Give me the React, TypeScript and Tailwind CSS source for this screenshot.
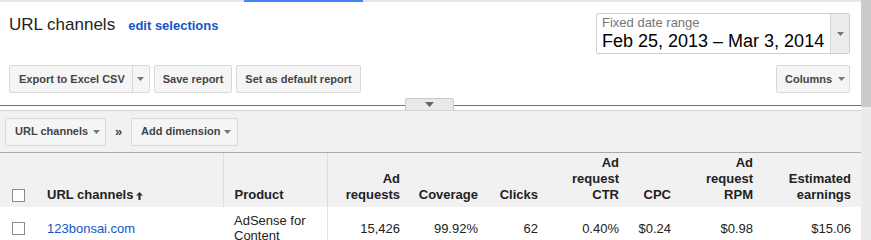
import React from 'react';

const Caret = ({ className = '' }: { className?: string }) => (
    <svg width="7" height="4" viewBox="0 0 7 4" className={className}>
        <path d="M0 0h7L3.5 4z" fill="#777" />
    </svg>
);

const Btn: React.FC<{ children: React.ReactNode; className?: string }> = ({ children, className = '' }) => (
    <div className={"h-[28px] flex items-center rounded-[2px] border border-[#d9d9d9] bg-[#f5f5f5] text-[11px] font-bold text-[#444] " + className}>
        {children}
    </div>
);

const Checkbox = () => <div className="w-[13px] h-[13px] border border-[#8a8a8a] bg-white" />;

const headers: { label: string[]; width: number }[] = [
    { label: ['Ad', 'requests'], width: 83 },
    { label: ['Coverage'], width: 78 },
    { label: ['Clicks'], width: 60 },
    { label: ['Ad', 'request', 'CTR'], width: 81 },
    { label: ['CPC'], width: 52 },
    { label: ['Ad', 'request', 'RPM'], width: 82 },
    { label: ['Estimated', 'earnings'], width: 98 },
];

const values = ['15,426', '99.92%', '62', '0.40%', '$0.24', '$0.98', '$15.06'];

export default function App() {
    return (
        <div className="w-[871px] h-[240px] overflow-hidden flex bg-[#f1f1f1] text-[#222] font-['Liberation_Sans',Arial,sans-serif]">
            <div className="w-[861px] shrink-0">
                {/* top tab strip */}
                <div className="h-[2px] bg-[#e6e6e6]">
                    <div className="ml-[244px] w-[119px] h-full bg-[#4285f4]" />
                </div>

                {/* report header */}
                <div className="bg-white h-[103px] pl-[9px] pr-[11px] pt-[11px]">
                    <div className="flex justify-between items-start">
                        <div className="flex items-baseline gap-[13px] leading-[24px]">
                            <span className="text-[17px]">URL channels</span>
                            <span className="text-[13px] font-bold text-[#1155cc]">edit selections</span>
                        </div>
                        <div className="w-[254px] h-[41px] flex border border-[#cfcfcf] rounded-[2px] bg-white">
                            <div className="flex-1 pl-[5px] pt-[1px]">
                                <div className="text-[13px] leading-[16px] text-[#777]">Fixed date range</div>
                                <div className="text-[18px] leading-[20px] text-black whitespace-nowrap">Feb 25, 2013 – Mar 3, 2014</div>
                            </div>
                            <div className="w-[19px] border-l border-[#d6d6d6] bg-[#ececec] flex items-center justify-center">
                                <Caret />
                            </div>
                        </div>
                    </div>
                    <div className="mt-[11px] flex justify-between">
                        <div className="flex gap-[4px]">
                            <Btn>
                                <span className="pl-[9px] pr-[7px]">Export to Excel CSV</span>
                                <span className="h-full w-[17px] border-l border-[#d9d9d9] flex items-center justify-center">
                                    <Caret />
                                </span>
                            </Btn>
                            <Btn className="px-[8px]">Save report</Btn>
                            <Btn className="px-[8px]">Set as default report</Btn>
                        </div>
                        <Btn className="w-[74px] pl-[8px] gap-[6px]">
                            Columns <Caret />
                        </Btn>
                    </div>
                </div>

                {/* collapse handle */}
                <div className="relative h-[1px] bg-[#4a7cc8]">
                    <div className="absolute left-[405px] top-[-7px] w-[49px] h-[12px] rounded-t-[3px] border border-b-0 border-[#c9c9c9] bg-[#e9e9e9] flex justify-center pt-[3px]">
                        <svg width="9" height="5" viewBox="0 0 9 5">
                            <path d="M0 0h9L4.5 5z" fill="#666" />
                        </svg>
                    </div>
                </div>
                <div className="h-[4px] bg-white" />
                <div className="h-[1px] bg-[#d4d4d4]" />

                {/* dimensions */}
                <div className="h-[42px] flex items-center pl-[5px] border-b border-[#aaaaaa]">
                    <Btn className="w-[101px] pl-[9px] pr-[5px] justify-between">
                        URL channels <Caret />
                    </Btn>
                    <span className="w-[25px] text-center text-[13px] font-bold text-[#444]">»</span>
                    <Btn className="w-[107px] pl-[9px] pr-[6px] justify-between">
                        Add dimension <Caret />
                    </Btn>
                </div>

                {/* table */}
                <table className="table-fixed border-collapse w-[861px] text-[13px]">
                    <colgroup>
                        <col style={{ width: 223 }} />
                        <col style={{ width: 104 }} />
                        {headers.map((h, i) => (
                            <col key={i} style={{ width: h.width }} />
                        ))}
                    </colgroup>
                    <thead>
                        <tr className="h-[54px] bg-[#f1f1f1] font-bold leading-[16px]">
                            <th className="align-bottom pb-[4px] pl-[12px] text-left font-bold">
                                <div className="flex items-center">
                                    <Checkbox />
                                    <span className="ml-[22px]">URL channels</span>
                                    <svg width="7" height="8" viewBox="0 0 7 8" className="ml-[3px] mt-[2px]">
                                        <path d="M3.5 0L0 3.5h2.4V8h2.2V3.5H7z" fill="#333" />
                                    </svg>
                                </div>
                            </th>
                            <th className="align-bottom pb-[4px] pl-[11px] text-left font-bold border-l border-[#dcdcdc]">Product</th>
                            {headers.map((h, i) => (
                                <th
                                    key={i}
                                    className={"align-bottom pb-[4px] pr-[10px] text-right font-bold " + (i === 0 ? 'border-l border-[#dcdcdc]' : '')}
                                >
                                    {h.label.map((l) => (
                                        <div key={l}>{l}</div>
                                    ))}
                                </th>
                            ))}
                        </tr>
                    </thead>
                    <tbody>
                        <tr className="bg-white leading-[15px]">
                            <td className="pl-[12px] align-middle">
                                <div className="flex items-center">
                                    <Checkbox />
                                    <span className="ml-[22px] text-[#1155cc]">123bonsai.com</span>
                                </div>
                            </td>
                            <td className="pl-[11px] pt-[6px] pb-[6px] align-top">AdSense for Content</td>
                            {values.map((v, i) => (
                                <td
                                    key={i}
                                    className={"pr-[10px] text-right align-middle " + (i === 0 ? 'border-l border-[#e4e4e4]' : '')}
                                >
                                    {v}
                                </td>
                            ))}
                        </tr>
                    </tbody>
                </table>
            </div>

            {/* scrollbar strip */}
            <div className="w-[10px] flex flex-col">
                <div className="h-[107px] bg-[#cbcbcb]" />
                <div className="flex-1 bg-[#ebebeb]" />
            </div>
        </div>
    );
}
